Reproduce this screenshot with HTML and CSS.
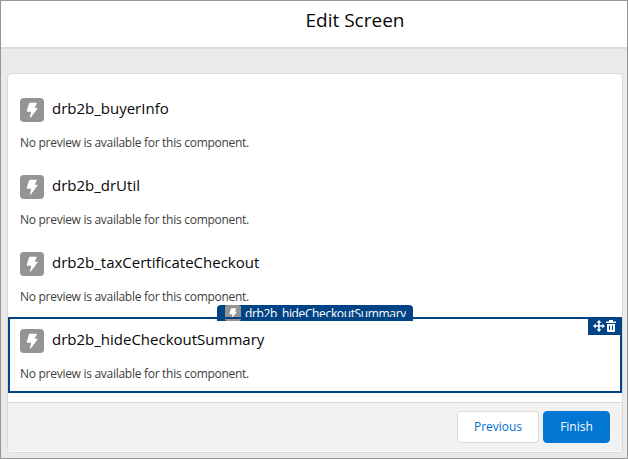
FILE: index.html
```html
<!DOCTYPE html>
<html lang="en">
<head>
<meta charset="utf-8">
<title>Edit Screen</title>
<link rel="stylesheet" href="styles.css">
</head>
<body>
<svg class="defs" width="0" height="0"><symbol id="bolt" viewBox="0 0 24 24"><path d="M9.800 4.800h6.500c.5 0 .7.3.5.7L14.600 9.800h2.400c.6 0 .8.500.4 1l-6.600 8.600c-.5.500-.9.200-.8-.3l1.200-5.400H7.300c-.5 0-.8-.4-.6-.9l2.400-7.500c.1-.3.3-.5.7-.5z"/></symbol></svg>
<div class="modal">
  <header class="header"><h1 class="title">Edit Screen</h1></header>
  <main class="canvas">
    <section class="card">
      <div class="list">
        <article class="item"><div class="row"><svg class="icon"><use href="#bolt"/></svg><h2 class="name">drb2b_buyerInfo</h2></div><p class="note">No preview is available for this component.</p></article>
        <article class="item"><div class="row"><svg class="icon"><use href="#bolt"/></svg><h2 class="name">drb2b_drUtil</h2></div><p class="note">No preview is available for this component.</p></article>
        <article class="item"><div class="row"><svg class="icon"><use href="#bolt"/></svg><h2 class="name">drb2b_taxCertificateCheckout</h2></div><p class="note">No preview is available for this component.</p></article>
        <article class="item selected">
          <div class="tab"><svg class="icon small"><use href="#bolt"/></svg><span class="tab-name">drb2b_hideCheckoutSummary</span></div>
          <div class="row"><svg class="icon"><use href="#bolt"/></svg><h2 class="name">drb2b_hideCheckoutSummary</h2></div><p class="note">No preview is available for this component.</p>
          <div class="tools">
            <svg width="12" height="12" viewBox="0 0 12 12"><path d="M6 0l2.500 2.700H6.800v2.500h2.500V3.500L12 6 9.300 8.500V6.800H6.800v2.500h1.700L6 12 3.500 9.300h1.700V6.800H2.700v1.700L0 6l2.700-2.500v1.700h2.500V2.700H3.500z"/></svg>
            <svg width="10" height="12" viewBox="0 0 10 12"><path fill-rule="evenodd" d="M3 0h4v1.500h3V3H0V1.500h3zM1 4h8v7q0 1-1 1H2q-1 0-1-1zm2 1.500v4.500h1V5.500zm3 0v4.500h1V5.500z"/></svg>
          </div>
        </article>
      </div>
      <footer class="footer"><button class="btn prev">Previous</button><button class="btn finish">Finish</button></footer>
    </section>
  </main>
</div>
</body>
</html>
```
FILE: styles.css
```css
* { box-sizing: border-box; }
body { margin: 0; font-family: "Open Sans", "Noto Sans", sans-serif; color: #080707; }
h1, h2, p { margin: 0; font-weight: 400; white-space: nowrap; }
.defs { position: absolute; }
.modal { display: flex; flex-direction: column; width: 628px; height: 459px; border: 1px solid #979595; background: #ebeae9; overflow: hidden; }
.header { height: 48px; flex: none; background: #fff; border-bottom: 2px solid #dddbda; text-align: center; padding: 6px 0 0 82px; }
.title { font-size: 19px; line-height: 26px; }
.canvas { padding: 24px 4px 5px 6px; flex: 1; display: flex; }
.card { flex: 1; display: flex; flex-direction: column; border: 1px solid #dddbda; border-radius: 4px; background: #fff; padding-bottom: 1px; }
.list { padding-top: 12px; height: 328px; flex: none; }
.item { position: relative; height: 77px; padding: 12px; }
.row { display: flex; align-items: center; height: 24px; }
.icon { width: 24px; height: 24px; border-radius: 4px; background: #969492; fill: #fff; flex: none; }
.name { margin-left: 8px; font-size: 15px; line-height: 24px; position: relative; top: -2px; }
.note { margin-top: 12px; font-size: 12px; line-height: 18px; letter-spacing: -0.28px; color: #3e3e3c; }
.selected { height: 76px; border: 2px solid #014486; padding: 10px; }
.tab { position: absolute; left: 207px; top: -14px; width: 196px; height: 16px; padding-left: 8px; display: flex; background: #014486; border-radius: 4px 4px 0 0; color: #fff; overflow: hidden; }
.tab::after { content: ""; position: absolute; left: 0; right: 0; top: 12px; height: 2px; background: #014486; }
.small { width: 16px; height: 16px; border-radius: 2px; }
.tab-name { margin-left: 4px; height: 12px; overflow: hidden; font-size: 12px; line-height: 17px; letter-spacing: -0.36px; }
.tools { position: absolute; right: 0; top: 0; width: 32px; height: 16px; padding: 1px 4px 0 5px; display: flex; justify-content: space-between; background: #014486; fill: #fff; }
.footer { flex: 1; display: flex; justify-content: flex-end; gap: 4px; padding: 8px 12px 0 0; background: #f3f2f2; border-top: 1px solid #dddbda; }
.btn { height: 32px; padding: 0; border: 1px solid #dddbda; border-radius: 4px; background: #fff; font: 12px/30px "Open Sans", sans-serif; color: #0070d2; }
.prev { width: 82px; }
.finish { width: 67px; background: #0176d3; border-color: #0176d3; color: #fff; }
```
